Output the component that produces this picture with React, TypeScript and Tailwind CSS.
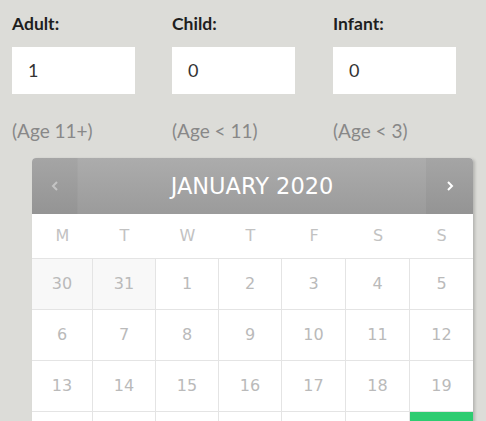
import React from "react";

const weekdays = ["M", "T", "W", "T", "F", "S", "S"];
const rows: { d: number; prev?: boolean }[][] = [
  [{ d: 30, prev: true }, { d: 31, prev: true }, { d: 1 }, { d: 2 }, { d: 3 }, { d: 4 }, { d: 5 }],
  [{ d: 6 }, { d: 7 }, { d: 8 }, { d: 9 }, { d: 10 }, { d: 11 }, { d: 12 }],
  [{ d: 13 }, { d: 14 }, { d: 15 }, { d: 16 }, { d: 17 }, { d: 18 }, { d: 19 }],
  [{ d: 20 }, { d: 21 }, { d: 22 }, { d: 23 }, { d: 24 }, { d: 25 }, { d: 26 }],
];

const fields = [
  { label: "Adult:", value: "1", note: "(Age 11+)" },
  { label: "Child:", value: "0", note: "(Age < 11)" },
  { label: "Infant:", value: "0", note: "(Age < 3)" },
];

export default function App() {
  return (
    <div className="w-[486px] h-[421px] overflow-hidden bg-[#dcdcd8] font-['Lato',sans-serif]">
      <div className="grid grid-cols-[160px_161px_123px] pl-[12px] pt-[12px]">
        {fields.map((f, i) => (
          <div key={i} className="flex flex-col">
            <div className="text-[17.5px] leading-[24px] font-bold text-[#1e1e1e]">{f.label}</div>
            <div className="mt-[11px] w-[123px] h-[47px] bg-white flex items-center pl-[16px] text-[18px] text-[#333]">
              {f.value}
            </div>
            <div className="mt-[25px] text-[19px] leading-[24px] text-[#888]">{f.note}</div>
          </div>
        ))}
      </div>

      <div className="ml-[32px] mt-[15px] w-[441px] bg-white rounded-t-[4px] shadow-[2px_1px_3px_rgba(0,0,0,0.18)] font-['DejaVu_Sans',sans-serif]">
        <div className="h-[56px] flex rounded-t-[4px] overflow-hidden bg-gradient-to-b from-[#acacac] to-[#9b9b9b]">
          <div className="w-[46px] h-full flex items-center justify-center bg-[rgba(0,0,0,0.04)] border-r border-[rgba(255,255,255,0.04)]">
            <svg width="8" height="10" viewBox="0 0 8 10">
              <path d="M6 1 L2 5 L6 9" stroke="#c4c4c4" strokeWidth="2" fill="none" />
            </svg>
          </div>
          <div className="flex-1 flex items-center justify-center text-white text-[22.5px] leading-none">
            JANUARY 2020
          </div>
          <div className="w-[47px] h-full flex items-center justify-center bg-[rgba(0,0,0,0.04)]">
            <svg width="8" height="10" viewBox="0 0 8 10">
              <path d="M2 1 L6 5 L2 9" stroke="#ffffff" strokeWidth="2" fill="none" />
            </svg>
          </div>
        </div>
        <div className="grid grid-cols-[61px_63px_63px_63px_64px_64px_63px] h-[45px] border-b border-[#e4e4e4]">
          {weekdays.map((w, i) => (
            <div key={i} className="flex items-center justify-center text-[16px] text-[#c2c2c2]">
              {w}
            </div>
          ))}
        </div>
        {rows.map((r, ri) => (
          <div key={ri} className="grid grid-cols-[61px_63px_63px_63px_64px_64px_63px] h-[51px] border-b border-[#e4e4e4]">
            {r.map((c, ci) => {
              const selected = ri === 3 && ci === 6;
              return (
                <div
                  key={ci}
                  className={
                    "flex items-center justify-center text-[16px] " +
                    (ci < 6 ? "border-r border-[#e4e4e4] " : "") +
                    (selected ? "bg-[#2ecc71] text-white" : c.prev ? "bg-[#f8f8f8] text-[#bababa]" : "bg-white text-[#bababa]")
                  }
                >
                  {c.d}
                </div>
              );
            })}
          </div>
        ))}
      </div>
    </div>
  );
}
